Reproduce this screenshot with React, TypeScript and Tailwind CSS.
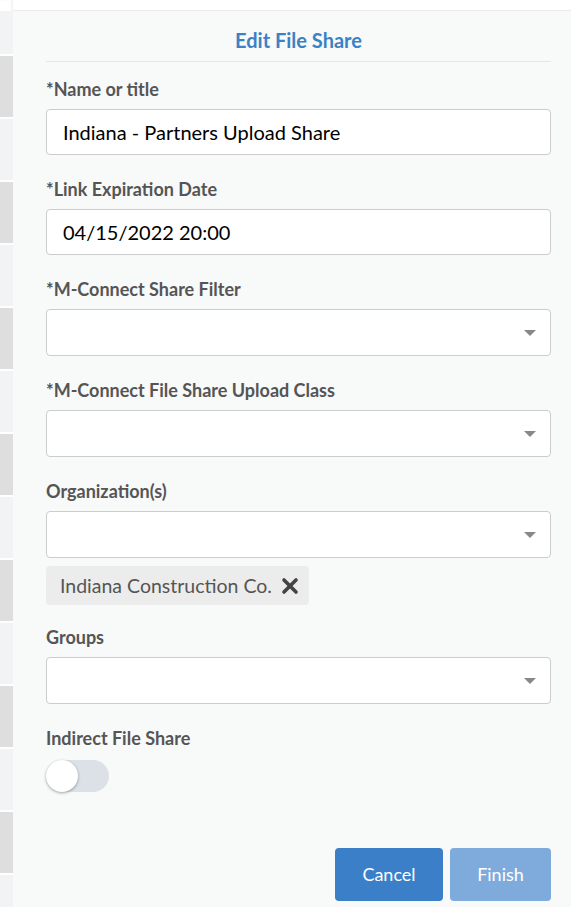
import { X } from 'lucide-react';

const font = { fontFamily: 'Lato, "Open Sans", sans-serif' };

function Label({ children }: { children: React.ReactNode }) {
  return (
    <div className="mb-2 text-[18px] font-bold leading-6 text-[#555555]">{children}</div>
  );
}

function TextField({ value }: { value: string }) {
  return (
    <div className="flex h-[46px] items-center rounded-[4px] border border-[#cccccc] bg-white px-4 text-[20px] text-black">
      {value}
    </div>
  );
}

function SelectField() {
  return (
    <div className="flex h-[47px] items-center justify-end rounded-[4px] border border-[#cccccc] bg-white pr-[14px]">
      <span className="h-0 w-0 border-x-[6px] border-t-[6px] border-x-transparent border-t-[#888888]" />
    </div>
  );
}

export default function App() {
  // striped rows of the list behind the panel
  const rows = Array.from({ length: 14 });

  return (
    <div className="flex h-[907px] w-[571px] overflow-hidden bg-white" style={font}>
      <div className="flex w-[13px] shrink-0 flex-col pt-[11px] shadow-[inset_-2px_0_2px_rgba(0,0,0,0.05)]">
        <div className="h-[45px] shrink-0 border-b-2 border-white bg-[#f2f3f5]" />
        {rows.map((_, i) => (
          <div
            key={i}
            className={`h-[63px] shrink-0 border-b-2 border-white ${i % 2 === 0 ? 'bg-[#dedede]' : 'bg-[#f2f3f5]'}`}
          />
        ))}
      </div>

      <div className="flex flex-1 flex-col">
        <div className="h-[11px] shrink-0 border-b border-[#ececec] bg-white" />
        <div className="flex flex-1 flex-col bg-[#f8f9f9] pl-[33px] pr-[20px]">
          <div className="flex h-[51px] items-end justify-center border-b border-[#e4e6e8] pb-[6px] text-[20px] font-bold text-[#3b82c4]">
            Edit File Share
          </div>

          <div className="mt-[15px] flex flex-col">
            <Label>*Name or title</Label>
            <TextField value="Indiana - Partners Upload Share" />

            <div className="mt-[22px]">
              <Label>*Link Expiration Date</Label>
              <TextField value="04/15/2022 20:00" />
            </div>

            <div className="mt-[22px]">
              <Label>*M-Connect Share Filter</Label>
              <SelectField />
            </div>

            <div className="mt-[22px]">
              <Label>*M-Connect File Share Upload Class</Label>
              <SelectField />
            </div>

            <div className="mt-[22px]">
              <Label>Organization(s)</Label>
              <SelectField />
              <div className="mt-2 inline-flex h-[39px] items-center gap-[6px] rounded-[4px] bg-[#ececec] pl-[14px] pr-[7px] text-[19.5px] text-[#555555]">
                Indiana Construction Co.
                <X size={24} strokeWidth={3.6} className="text-[#444444]" />
              </div>
            </div>

            <div className="mt-[20px]">
              <Label>Groups</Label>
              <SelectField />
            </div>

            <div className="mt-[22px]">
              <Label>Indirect File Share</Label>
              <div className="relative mt-[10px] h-[32px] w-[63px] rounded-full bg-[#dce1e7]">
                <div className="absolute left-0 top-0 h-[32px] w-[32px] rounded-full bg-white shadow-[0_1px_3px_rgba(0,0,0,0.35)]" />
              </div>
            </div>
          </div>

          <div className="mt-auto mb-[6px] flex justify-end gap-[7px]">
            <button className="h-[53px] w-[108px] rounded-[4px] bg-[#3a7fc8] text-[18px] text-white">
              Cancel
            </button>
            <button className="h-[53px] w-[101px] rounded-[4px] bg-[#7eaadc] text-[18px] text-white">
              Finish
            </button>
          </div>
        </div>
      </div>
    </div>
  );
}
